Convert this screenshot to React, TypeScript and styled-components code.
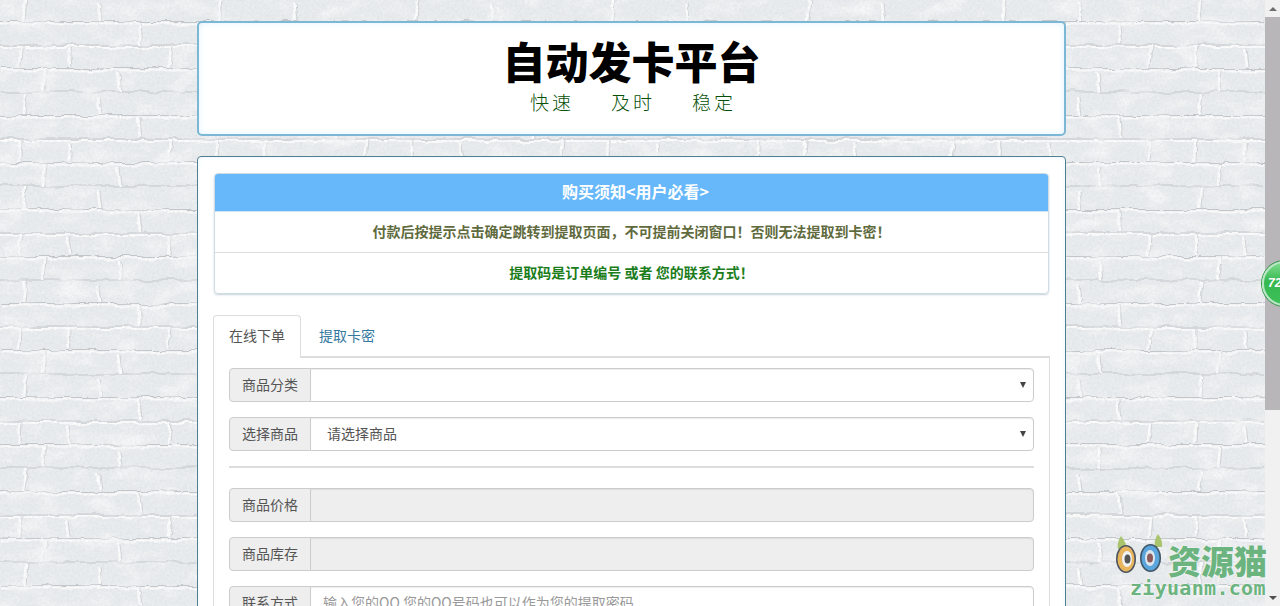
import React from "react";
import styled, { createGlobalStyle } from "styled-components";

const Global = createGlobalStyle`
  html, body { margin: 0; height: 100%; overflow: hidden; }
  body { font-family: "Noto Sans CJK SC", "Liberation Sans", sans-serif; font-size: 14px; color: #333; background: #e9ecee; }
  * { box-sizing: border-box; }
`;

const Viewport = styled.div`
  position: relative;
  display: flex;
  width: 1280px;
  height: 606px;
  overflow: hidden;
`;

const PageArea = styled.div`
  position: relative;
  flex: 1;
  min-width: 0;
  height: 100%;
  overflow: hidden;
`;

const Wall = styled.svg`
  position: absolute;
  inset: 0;
  width: 100%;
  height: 100%;
`;

const Container = styled.main`
  position: relative;
  width: 869px;
  margin: 21px 0 0 197px;
  display: flex;
  flex-direction: column;
  gap: 20px;
`;

const Header = styled.header`
  height: 115px;
  background: #fff;
  border: 2px solid #7db7d6;
  border-radius: 5px;
  box-shadow: inset 0 0 6px #dff2fb;
  text-align: center;
  padding-top: 10px;
`;

const Title = styled.h1`
  margin: 0;
  font-size: 43px;
  line-height: 55px;
  font-weight: 900;
  color: #000;
`;

const Slogan = styled.div`
  display: flex;
  justify-content: center;
  gap: 37px;
  font-size: 19px;
  line-height: 28px;
  font-weight: 300;
  color: #064f06;
  letter-spacing: 3px;
  padding-left: 3px;
`;

const Panel = styled.section`
  background: #fff;
  border: 1px solid #4f7f90;
  border-radius: 4px;
  padding: 16px;
  box-shadow: inset 0 0 5px #e8f6fc;
`;

const Notice = styled.div`
  border: 1px solid #cfdce4;
  border-radius: 4px;
  box-shadow: 0 1px 2px #c5d3dc;
  overflow: hidden;
  margin-bottom: 21px;
`;

const NoticeHead = styled.div`
  height: 37px;
  background: #66b8fb;
  color: #fff;
  font-size: 16px;
  font-weight: 700;
  line-height: 35px;
  text-align: center;
  padding-left: 8px;
  border-bottom: 1px solid #66b8fb;
`;

const NoticeRow = styled.div<{ $color: string }>`
  height: 41px;
  line-height: 38px;
  text-align: center;
  font-weight: 700;
  font-size: 14px;
  color: ${(p) => p.$color};
  border-top: 1px solid #ddd;
  &:nth-child(2) { border-top: 1px solid #cfe3f2; }
`;

const Tabs = styled.nav`
  display: flex;
  height: 43px;
  border-bottom: 2px solid #ddd;
  margin: 0 -1px;
`;

const Tab = styled.div<{ $active?: boolean }>`
  height: 43px;
  padding: 9px 15px 11px;
  line-height: 20px;
  margin-right: 2px;
  border: 1px solid ${(p) => (p.$active ? "#ddd" : "transparent")};
  border-bottom: 0;
  border-radius: 4px 4px 0 0;
  background: ${(p) => (p.$active ? "#fff" : "transparent")};
  color: ${(p) => (p.$active ? "#555" : "#35799f")};
`;

const TabBody = styled.div`
  border: 1px solid #ddd;
  border-top: 0;
  margin: 0 -1px;
  padding: 10px 15px 120px;
`;

const Group = styled.div`
  display: flex;
  height: 34px;
  margin-bottom: 15px;
`;

const Addon = styled.label`
  flex: none;
  width: 82px;
  height: 34px;
  padding: 5px 12px 7px;
  line-height: 20px;
  color: #555;
  background: #eee;
  border: 1px solid #ccc;
  border-radius: 4px 0 0 4px;
  white-space: nowrap;
`;

const controlStyles = `
  flex: 1;
  min-width: 0;
  height: 34px;
  margin-left: -1px;
  padding: 5px 12px 7px;
  font: 14px "Noto Sans CJK SC", "Liberation Sans", sans-serif;
  color: #555;
  background-color: #fff;
  border: 1px solid #ccc;
  border-radius: 0 4px 4px 0;
  outline: none;
  box-shadow: inset 0 1px 1px rgba(0,0,0,.075);
`;

const Select = styled.select`
  ${controlStyles}
  appearance: none;
  padding-left: 16px;
  background-image: url("data:image/svg+xml,%3Csvg xmlns='http://www.w3.org/2000/svg' width='6' height='6'%3E%3Cpath d='M0 0h6L3 6z' fill='%23444'/%3E%3C/svg%3E");
  background-repeat: no-repeat;
  background-position: right 7px center;
`;

const Input = styled.input`
  ${controlStyles}
  &:disabled { background: #eee; }
  &::placeholder { color: #999; opacity: 1; }
`;

const Rule = styled.hr`
  border: 0;
  border-top: 2px solid #ddd;
  margin: 0 0 20px;
`;

const Bar = styled.aside`
  flex: none;
  width: 15px;
  height: 100%;
  display: flex;
  flex-direction: column;
  background: #f1f1f1;
`;

const BarButton = styled.div<{ $up?: boolean }>`
  flex: none;
  height: 17px;
  display: flex;
  align-items: center;
  justify-content: center;
  &::before {
    content: "";
    border-left: 4px solid transparent;
    border-right: 4px solid transparent;
    ${(p) => (p.$up ? "border-bottom: 4px solid #6e6e6e;" : "border-top: 4px solid #505050;")}
  }
`;

const BarTrack = styled.div`
  flex: 1;
  min-height: 0;
`;

const BarThumb = styled.div`
  height: 393px;
  background: #b8b6b8;
`;

const Badge = styled.div`
  position: absolute;
  left: 1262px;
  top: 261px;
  width: 45px;
  height: 45px;
  border-radius: 50%;
  background: linear-gradient(#7fdc8e, #35b84f 45%, #3fc05a);
  border: 2px solid #b9e6c4;
  box-shadow: 0 0 0 1px #2f9a48;
  color: #fff;
  font: italic 700 12px/41px "Liberation Sans", sans-serif;
  padding-left: 4px;
`;

const Watermark = styled.div`
  position: absolute;
  left: 1116px;
  top: 533px;
  width: 156px;
  height: 70px;
  display: grid;
  grid-template-columns: 52px auto;
  grid-template-rows: 44px 24px;
`;

const Owl = styled.svg`
  grid-row: 1 / 2;
  width: 50px;
  height: 44px;
`;

const MarkName = styled.div`
  align-self: end;
  height: 32px;
  font-size: 33px;
  line-height: 30px;
  font-weight: 900;
  color: #6cb47f;
  text-shadow: 0 0 2px #fff;
  white-space: nowrap;
`;

const MarkUrl = styled.div`
  grid-column: 1 / 3;
  font: 700 20px/22px "DejaVu Sans Mono", "Liberation Mono", monospace;
  color: #6cb47f;
  text-shadow: 0 0 2px #fff;
  padding-left: 14px;
  letter-spacing: 0.3px;
  white-space: nowrap;
`;

const bands = [0, 1, 2, 3];

const BrickWall = () => (
  <Wall aria-hidden="true">
    <defs>
      <pattern id="bricks" width="196" height="94" patternUnits="userSpaceOnUse" y="-1">
        {bands.map((i) => (
          <g key={i}>
            <rect x="0" y={i * 23.5 + 22} width="196" height="1" fill="#c2c6c9" />
            <rect x="0" y={i * 23.5 + 23.5} width="196" height="2" fill="#fdfdfd" />
          </g>
        ))}
        <path d="M25 0l-2 22M98 4l2 18M138 24l2 21M20 47l-1 21M68 50l2 18M170 47l-2 21M44 71l-2 22M118 74l2 19" stroke="#fcfdfd" strokeWidth="2.5" fill="none" />
        <path d="M27 0l-2 22M100 4l2 18M140 24l2 21M22 47l-1 21M70 50l2 18M172 47l-2 21M46 71l-2 22M120 74l2 19" stroke="#d0d4d6" strokeWidth="1" fill="none" />
      </pattern>
      <filter id="rough" x="0" y="0" width="100%" height="100%">
        <feTurbulence type="fractalNoise" baseFrequency="0.05" numOctaves="3" seed="7" />
        <feDisplacementMap in="SourceGraphic" scale="7" xChannelSelector="R" yChannelSelector="G" />
      </filter>
      <filter id="blotch" x="0" y="0" width="100%" height="100%">
        <feTurbulence type="fractalNoise" baseFrequency="0.035 0.06" numOctaves="4" seed="11" />
        <feColorMatrix values="0 0 0 0 0.93  0 0 0 0 0.94  0 0 0 0 0.945  1.6 1.6 0 0 -1.55" />
      </filter>
      <filter id="grain" x="0" y="0" width="100%" height="100%">
        <feTurbulence type="fractalNoise" baseFrequency="0.4" numOctaves="3" seed="4" />
        <feColorMatrix values="0 0 0 0 0.6  0 0 0 0 0.62  0 0 0 0 0.63  0.35 0.35 0 0 -0.25" />
      </filter>
    </defs>
    <rect width="100%" height="100%" fill="#eaedef" />
    <rect width="100%" height="100%" fill="url(#bricks)" filter="url(#rough)" />
    <rect width="100%" height="100%" filter="url(#blotch)" />
    <rect width="100%" height="100%" filter="url(#grain)" />
  </Wall>
);

export default function App() {
  return (
    <>
      <Global />
      <Viewport>
        <PageArea>
          <BrickWall />
          <Container>
            <Header>
              <Title>自动发卡平台</Title>
              <Slogan>
                <span>快速</span>
                <span>及时</span>
                <span>稳定</span>
              </Slogan>
            </Header>
            <Panel>
              <Notice>
                <NoticeHead>购买须知&lt;用户必看&gt;</NoticeHead>
                <NoticeRow $color="#5f6b3e">付款后按提示点击确定跳转到提取页面，不可提前关闭窗口！否则无法提取到卡密！</NoticeRow>
                <NoticeRow $color="#1c7d1c">提取码是订单编号 或者 您的联系方式！</NoticeRow>
              </Notice>
              <Tabs>
                <Tab $active>在线下单</Tab>
                <Tab>提取卡密</Tab>
              </Tabs>
              <TabBody>
                <Group>
                  <Addon>商品分类</Addon>
                  <Select defaultValue="" aria-label="商品分类">
                    <option value=""></option>
                  </Select>
                </Group>
                <Group>
                  <Addon>选择商品</Addon>
                  <Select defaultValue="" aria-label="选择商品">
                    <option value="">请选择商品</option>
                  </Select>
                </Group>
                <Rule />
                <Group>
                  <Addon>商品价格</Addon>
                  <Input disabled aria-label="商品价格" />
                </Group>
                <Group>
                  <Addon>商品库存</Addon>
                  <Input disabled aria-label="商品库存" />
                </Group>
                <Group>
                  <Addon>联系方式</Addon>
                  <Input placeholder="输入您的QQ 您的QQ号码也可以作为您的提取密码" aria-label="联系方式" />
                </Group>
              </TabBody>
            </Panel>
          </Container>
        </PageArea>
        <Bar>
          <BarButton $up />
          <BarTrack>
            <BarThumb />
          </BarTrack>
          <BarButton />
        </Bar>
        <Watermark>
          <Owl viewBox="0 0 50 44">
            <path d="M2 16c-1-6 1-10 3-13 2 3 6 7 5 13z" fill="#a9c46c" />
            <path d="M39 14c-1-6 1-10 3-13 2 3 5 7 4 13z" fill="#a9c46c" />
            <ellipse cx="10" cy="26" rx="10" ry="14" fill="#4c5560" />
            <ellipse cx="10" cy="26" rx="8.5" ry="12.5" fill="#e8b45c" />
            <ellipse cx="11" cy="26" rx="5" ry="8" fill="#f1f2f2" />
            <ellipse cx="11.5" cy="26" rx="3" ry="4.5" fill="#555" />
            <ellipse cx="34.5" cy="25" rx="10.5" ry="14" fill="#3f5566" />
            <ellipse cx="34.5" cy="25" rx="9" ry="12.5" fill="#5aa6dc" />
            <ellipse cx="34" cy="25" rx="5" ry="8" fill="#dce6ec" />
            <ellipse cx="34" cy="25" rx="3" ry="4.5" fill="#8a5a5a" />
          </Owl>
          <MarkName>资源猫</MarkName>
          <MarkUrl>ziyuanm.com</MarkUrl>
        </Watermark>
        <Badge>72</Badge>
      </Viewport>
    </>
  );
}
